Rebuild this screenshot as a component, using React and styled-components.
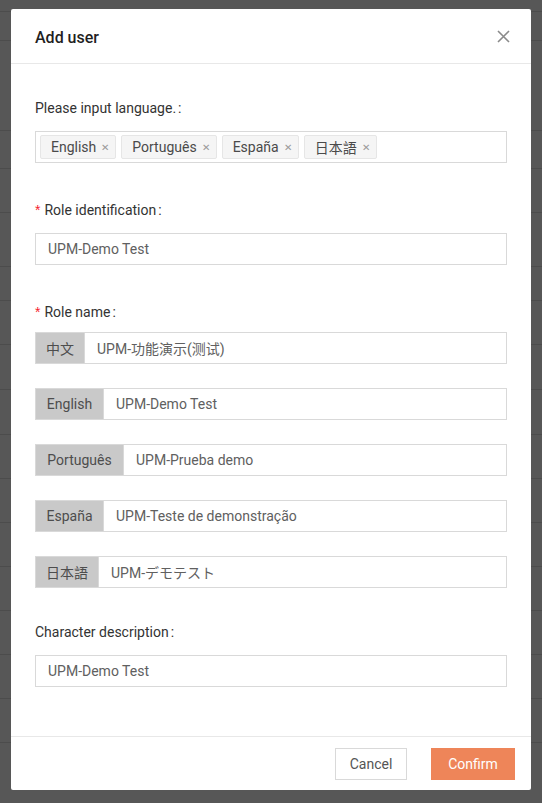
import React from 'react';
import styled, { createGlobalStyle } from 'styled-components';

const GlobalStyle = createGlobalStyle`
  html, body {
    margin: 0;
    padding: 0;
    background: #575757;
    font-family: Roboto, "Noto Sans", "Noto Sans CJK SC", sans-serif;
    font-size: 14px;
  }
  * { box-sizing: border-box; }
`;

const Page = styled.div`
  position: relative;
  width: 542px;
  height: 803px;
  overflow: hidden;
  background: #575757;
`;

const BgRow = styled.div`
  height: ${(p) => p.h}px;
  border-bottom: 1px solid #4c4c4c;
`;

const Overlay = styled.div`
  position: absolute;
  inset: 0;
  padding: 9px 11px 0;
`;

const Modal = styled.div`
  width: 520px;
  height: 781px;
  background: #fff;
  border-radius: 2px;
  display: flex;
  flex-direction: column;
`;

const Header = styled.div`
  height: 55px;
  padding: 0 24px;
  display: flex;
  align-items: center;
  justify-content: space-between;
  border-bottom: 1px solid #e8e8e8;
`;

const Title = styled.div`
  font-size: 16px;
  font-weight: 500;
  color: #1f1f1f;
  padding-top: 2px;
`;

const Close = styled.button`
  border: none;
  background: none;
  padding: 0;
  margin-right: -4px;
  width: 16px;
  height: 16px;
  display: flex;
  align-items: center;
  justify-content: center;
  cursor: pointer;
`;

const Body = styled.div`
  flex: 1;
  padding: 33px 24px 0;
`;

const Item = styled.div`
  margin-bottom: ${(p) => p.mb ?? 36}px;
`;

const Label = styled.div`
  height: 22px;
  line-height: 22px;
  color: #333;
  margin-bottom: ${(p) => p.gap ?? 12}px;
  display: flex;
  align-items: center;
`;

const Star = styled.span`
  color: #f5222d;
  margin-right: 4px;
  font-size: 14px;
  font-family: SimSun, "Liberation Sans", sans-serif;
`;

const Colon = styled.span`
  margin-left: 2px;
`;

const SelectBox = styled.div`
  height: 32px;
  border: 1px solid #d9d9d9;
  padding: 0 4px;
  display: flex;
  align-items: center;
  gap: 5px;
`;

const Tag = styled.span`
  height: 24px;
  display: inline-flex;
  align-items: center;
  padding: 0 6px 0 10px;
  background: #f5f5f5;
  border: 1px solid #e6e6e6;
  border-radius: 2px;
  color: #4a4a4a;
  font-size: 14px;
`;

const TagX = styled.span`
  margin-left: 5px;
  font-size: 10px;
  color: #999;
`;

const Input = styled.div`
  height: 32px;
  border: 1px solid #d9d9d9;
  padding: 0 12px;
  display: flex;
  align-items: center;
  color: #606060;
  flex: 1;
`;

const Group = styled.div`
  display: flex;
  height: 32px;
  margin-bottom: ${(p) => p.last ? 0 : 24}px;
`;

const Addon = styled.div`
  width: ${(p) => p.w}px;
  background: #c9c9c9;
  color: #4d4d4d;
  display: flex;
  align-items: center;
  justify-content: center;
  border: 1px solid #d9d9d9;
  border-right: none;
`;

const GroupInput = styled(Input)`
  padding-left: 12px;
`;

const Footer = styled.div`
  height: 54px;
  border-top: 1px solid #e8e8e8;
  padding: 0 16px;
  display: flex;
  align-items: center;
  justify-content: flex-end;
  gap: 24px;
`;

const Button = styled.button`
  height: 32px;
  width: ${(p) => p.w}px;
  padding: 0;
  font-family: inherit;
  font-size: 14px;
  border-radius: 0;
  border: 1px solid ${(p) => (p.primary ? '#ee8559' : '#d9d9d9')};
  background: ${(p) => (p.primary ? '#ee8559' : '#fff')};
  color: ${(p) => (p.primary ? '#fff' : '#555')};
  cursor: pointer;
`;

const bgRows = [12, 29, 90, 38, 44, 54, 34, 44, 45, 45, 44, 44, 44, 44, 44, 44, 44];

const langs = ['English', 'Português', 'España', '日本語'];

const names = [
  { lang: '中文', w: 49, value: 'UPM-功能演示(测试)' },
  { lang: 'English', w: 68, value: 'UPM-Demo Test' },
  { lang: 'Português', w: 88, value: 'UPM-Prueba demo' },
  { lang: 'España', w: 68, value: 'UPM-Teste de demonstração' },
  { lang: '日本語', w: 63, value: 'UPM-デモテスト' },
];

export default function App() {
  return (
    <Page>
      <GlobalStyle />
      {bgRows.map((h, i) => (
        <BgRow key={i} h={h} />
      ))}
      <Overlay>
        <Modal>
          <Header>
            <Title>Add user</Title>
            <Close aria-label="close">
              <svg width="13" height="13" viewBox="0 0 13 13">
                <path d="M1 1 L12 12 M12 1 L1 12" stroke="#8a8a8a" strokeWidth="1.6" />
              </svg>
            </Close>
          </Header>
          <Body>
            <Item>
              <Label>Please input language.<Colon>:</Colon></Label>
              <SelectBox>
                {langs.map((l) => (
                  <Tag key={l}>
                    {l}
                    <TagX>✕</TagX>
                  </Tag>
                ))}
              </SelectBox>
            </Item>
            <Item>
              <Label><Star>*</Star>Role identification<Colon>:</Colon></Label>
              <Input>UPM-Demo Test</Input>
            </Item>
            <Item mb={33}>
              <Label gap={9}><Star>*</Star>Role name<Colon>:</Colon></Label>
              {names.map((n, i) => (
                <Group key={n.lang} last={i === names.length - 1}>
                  <Addon w={n.w}>{n.lang}</Addon>
                  <GroupInput>{n.value}</GroupInput>
                </Group>
              ))}
            </Item>
            <Item mb={0}>
              <Label>Character description<Colon>:</Colon></Label>
              <Input>UPM-Demo Test</Input>
            </Item>
          </Body>
          <Footer>
            <Button w={72}>Cancel</Button>
            <Button primary w={84}>Confirm</Button>
          </Footer>
        </Modal>
      </Overlay>
    </Page>
  );
}
